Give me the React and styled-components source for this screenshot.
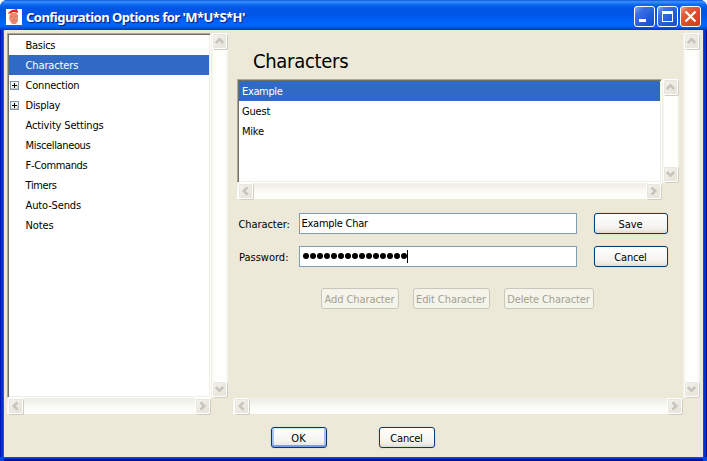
import React from 'react';
import styled, { createGlobalStyle, css } from 'styled-components';

const Global = createGlobalStyle`
  * { box-sizing: border-box; }
  body { margin: 0; background: #fff; }
`;

const Window = styled.div`
  width: 707px;
  height: 461px;
  display: flex;
  flex-direction: column;
  overflow: hidden;
  border-radius: 7px 7px 0 0;
  background: #0048e0;
  font: 11px/20px 'DejaVu Sans Condensed', 'DejaVu Sans', sans-serif;
  font-stretch: condensed;
  color: #000;
  white-space: nowrap;
`;

const TitleBar = styled.header`
  height: 30px;
  flex: none;
  display: flex;
  align-items: center;
  padding: 3px 6px 0 6px;
  background: linear-gradient(#0848c8 0, #2a84f8 1px, #3a90ff 2px, #1670f4 4px, #0660ea 6px, #0055e4 9px, #0056e8 15px, #0062fb 22px, #0066ff 25px, #005cf0 27px, #0044cc 29px, #0038b8 30px);
`;

const Title = styled.h1`
  flex: 1;
  margin: 0 0 0 4px;
  font: bold 13px/20px 'Noto Sans', 'DejaVu Sans Condensed', sans-serif;
  letter-spacing: ${p => p.$spacing}px;
  color: #fff;
  text-shadow: 1px 1px 1px #0a1883;
`;

const CaptionButtons = styled.div`
  display: flex;
  gap: 2px;
`;

const CaptionButton = styled.button`
  width: 21px;
  height: 21px;
  padding: 0;
  border: 1px solid #fff;
  border-radius: 3px;
  display: flex;
  background: ${p => p.$close
    ? 'linear-gradient(135deg, #f0a088 0, #e0603c 25%, #d84820 65%, #c84018 100%)'
    : 'linear-gradient(135deg, #86a8f4 0, #3c70e8 25%, #2458dc 65%, #1c4cc8 100%)'};
`;

const Client = styled.main`
  height: 427px;
  margin: 0 4px 4px;
  padding: 3px 3px 0;
  background: #ece9d8;
  box-shadow: -1px 0 #1058e8, -3px 0 #0030d8, -4px 0 #0018b0, 1px 0 #0848e0, 3px 0 #0030d0, 4px 0 #001090, 0 1px #0848e0, 0 2px #0038d8, 0 4px #001090;
`;

const Columns = styled.div`
  display: flex;
  height: 382px;
  gap: 5px;
`;

const ScrollFrame = styled.div`
  width: ${p => p.$w}px;
  height: ${p => p.$h}px;
  flex: none;
  display: grid;
  grid-template-columns: 1fr 17px;
  grid-template-rows: 1fr 17px;
`;

const Pane = styled.div`
  overflow: hidden;
  min-width: 0;
  min-height: 0;
  ${p => p.$sunken && css`
    background: #fff;
    border: 1px solid;
    border-color: #aca899 #fff #fff #aca899;
    box-shadow: inset 1px 1px #716f64, inset -1px -1px #f1efe2;
    padding: 1px;
  `}
`;

const Track = styled.div`
  display: flex;
  justify-content: space-between;
  flex-direction: ${p => (p.$vertical ? 'column' : 'row')};
  background: ${p => (p.$vertical
    ? 'linear-gradient(90deg, #f0efe8 0, #f0efe8 1px, #fefefa 2px, #fefefa 15px, #eeede5 17px)'
    : 'linear-gradient(#f5f4ec 0, #eeede5 1px, #f3f2ed 4px, #fcfcfa 10px, #fefefb 16px, #ece9d8 16px)')};
`;

const ArrowBox = styled.div`
  width: 17px;
  height: 17px;
  flex: none;
  display: flex;
  padding: 0 0 0 1px;
  svg {
    width: 15px;
    height: 16px;
    border: 1px solid #fff;
    border-radius: 2px;
    background: linear-gradient(135deg, #f3f2ed, #e5e4d8);
    box-shadow: 1px 1px #cfcdbf, inset 0 0 0 1px #e8e7df;
  }
`;

const Tree = styled.ul`
  margin: 0;
  padding: 0;
  list-style: none;
`;

const Row = styled.li`
  height: 20px;
  display: flex;
  align-items: center;
  padding-left: ${p => p.$indent}px;
  letter-spacing: ${p => p.$spacing || 0}px;
  ${p => p.$selected && css`
    background: #316ac5;
    color: #fff;
  `}
`;

const RowText = styled.span`
  height: 20px;
  line-height: 22px;
`;

const Expander = styled.span`
  width: 16px;
  height: 9px;
  display: flex;
  flex: none;
`;

const Heading = styled.h2`
  margin: 0;
  height: 46px;
  padding: 13px 0 0 20px;
  font: 20px/30px 'DejaVu Sans Condensed', 'DejaVu Sans', sans-serif;
  font-stretch: condensed;
  letter-spacing: ${p => p.$spacing}px;
`;

const PaneBody = styled.div`
  padding-left: 4px;
`;

const Field = styled.div`
  display: grid;
  grid-template-columns: 62px 295px 74px;
  height: 21px;
  margin-top: ${p => p.$top}px;
`;

const Label = styled.label`
  padding-left: ${p => p.$pad}px;
  line-height: 23px;
  letter-spacing: ${p => p.$spacing || 0}px;
`;

const Input = styled.div`
  width: 278px;
  height: 21px;
  display: flex;
  align-items: center;
  padding-left: ${p => p.$pad}px;
  border: 1px solid #7f9db9;
  background: #fff;
  letter-spacing: ${p => p.$spacing || 0}px;
`;

const Dots = styled.span`
  display: flex;
  gap: 1px;
  padding: 0 0 1px 1px;
`;

const Dot = styled.i`
  width: 6px;
  height: 6px;
  border-radius: 50%;
  background: #000;
`;

const Caret = styled.i`
  width: 1px;
  height: 13px;
  margin: 0 0 1px;
  background: #000;
`;

const Button = styled.button`
  width: ${p => p.$w}px;
  height: 21px;
  padding: 2px 0 0;
  border: 1px solid #003c74;
  border-radius: 3px;
  background: linear-gradient(#fff, #f4f3ee 70%, #ebe9e0 88%, #dcd8cc);
  box-shadow: 0 0 0 1px #e5e1d1;
  font: inherit;
  line-height: 17px;
  letter-spacing: ${p => p.$spacing || 0}px;
  text-align: center;
  text-indent: -1px;
  color: #000;
  ${p => p.$primary && css`
    box-shadow: inset 0 1px #cee7ff, inset 0 -2px #7b9de4, inset 2px 0 #a6c2f2, inset -2px 0 #a6c2f2, 0 0 0 1px #e5e1d1;
  `}
  &:disabled {
    border-color: #c9c7ba;
    background: #f5f4ea;
    color: #a1a192;
    box-shadow: none;
  }
`;

const Actions = styled.div`
  display: flex;
  gap: 14px;
  margin: 21px 0 0 84px;
`;

const Footer = styled.footer`
  display: flex;
  gap: 52px;
  padding: 12px 0 0 264px;
`;

const angles = { up: 0, right: 90, down: 180, left: 270 };

function Arrow({ dir }) {
  return (
    <ArrowBox>
      <svg viewBox="0 0 13 14">
        <path d="M2.800 9 6.500 5.300 10.200 9" fill="none" stroke="#c6c5bc" strokeWidth="2.600" transform={`rotate(${angles[dir]} 6.5 7)`} />
      </svg>
    </ArrowBox>
  );
}

function Scroller({ w, h, sunken, children }) {
  return (
    <ScrollFrame $w={w} $h={h}>
      <Pane $sunken={sunken}>{children}</Pane>
      <Track $vertical><Arrow dir="up" /><Arrow dir="down" /></Track>
      <Track><Arrow dir="left" /><Arrow dir="right" /></Track>
    </ScrollFrame>
  );
}

function Plus() {
  return (
    <svg width="9" height="9" shapeRendering="crispEdges">
      <rect width="9" height="9" fill="#7898b5" />
      <rect x="1" y="1" width="7" height="7" fill="#f6f4ee" />
      <path d="M1 7h7v1h-7zM7 4h1v4h-1z" fill="#d0c8b8" />
      <path d="M2 4h5v1h-5zM4 2h1v5h-1z" fill="#000" />
    </svg>
  );
}

function AppIcon() {
  return (
    <svg width="16" height="16" viewBox="0 0 16 16">
      <rect width="16" height="16" fill="#fff" />
      <path d="M4 5 5 4h5l2 2v6l-2 3H6l-2-3-1-3z" fill="#ef8872" />
      <path d="M3 3 6 1l5-1 1 3-1 1-3-1-3 1-3 1z" fill="#dc2a20" />
      <path d="M5 7.500h2M9 7.500h2M6 11.500h4M8 9.500h1" stroke="#d07868" strokeWidth="1" />
    </svg>
  );
}

const topics = [
  { name: 'Basics', spacing: -0.3 },
  { name: 'Characters', spacing: -0.14, selected: true },
  { name: 'Connection', spacing: -0.23, expandable: true },
  { name: 'Display', spacing: -0.3, expandable: true },
  { name: 'Activity Settings', spacing: -0.16 },
  { name: 'Miscellaneous', spacing: -0.36 },
  { name: 'F-Commands', spacing: -0.36 },
  { name: 'Timers', spacing: -0.4 },
  { name: 'Auto-Sends', spacing: -0.15 },
  { name: 'Notes', spacing: -0.15 },
];

export default function App() {
  return (
    <>
      <Global />
      <Window>
        <TitleBar>
          <AppIcon />
          <Title $spacing={-0.53}>Configuration Options for 'M*U*S*H'</Title>
          <CaptionButtons>
            <CaptionButton>
              <svg width="19" height="19"><path d="M4 12h7v3H4z" fill="#fff" /></svg>
            </CaptionButton>
            <CaptionButton>
              <svg width="19" height="19"><path fillRule="evenodd" d="M4 4h11v11H4zM5 7v7h9V7z" fill="#fff" /></svg>
            </CaptionButton>
            <CaptionButton $close>
              <svg width="19" height="19"><path d="M4.500 4.500l10 10M14.500 4.500l-10 10" stroke="#fff" strokeWidth="2.300" /></svg>
            </CaptionButton>
          </CaptionButtons>
        </TitleBar>
        <Client>
          <Columns>
            <Scroller w={221} h={382} sunken>
              <Tree>
                {topics.map(t => (
                  <Row key={t.name} $indent={t.expandable ? 0.6 : 16.6} $selected={t.selected} $spacing={t.spacing}>
                    {t.expandable && <Expander><Plus /></Expander>}
                    <RowText>{t.name}</RowText>
                  </Row>
                ))}
              </Tree>
            </Scroller>
            <Scroller w={467} h={382}>
              <Heading $spacing={-0.3}>Characters</Heading>
              <PaneBody>
                <Scroller w={442} h={121} sunken>
                  <Tree>
                    <Row $indent={3} $spacing={-0.35} $selected><RowText>Example</RowText></Row>
                    <Row $indent={3} $spacing={-0.2}><RowText>Guest</RowText></Row>
                    <Row $indent={3} $spacing={-0.25}><RowText>Mike</RowText></Row>
                  </Tree>
                </Scroller>
                <Field $top={13}>
                  <Label $pad={1.5} $spacing={-0.08}>Character:</Label>
                  <Input $pad={1.5} $spacing={-0.26}>Example Char</Input>
                  <Button $w={74} $spacing={-0.1}>Save</Button>
                </Field>
                <Field $top={12}>
                  <Label $pad={2}>Password:</Label>
                  <Input $pad={2}>
                    <Dots>{Array.from({ length: 15 }, (_, i) => <Dot key={i} />)}</Dots>
                    <Caret />
                  </Input>
                  <Button $w={74} $spacing={-0.2}>Cancel</Button>
                </Field>
                <Actions>
                  <Button $w={78} $spacing={-0.08} disabled>Add Character</Button>
                  <Button $w={77} $spacing={-0.08} disabled>Edit Character</Button>
                  <Button $w={90} $spacing={-0.12} disabled>Delete Character</Button>
                </Actions>
              </PaneBody>
            </Scroller>
          </Columns>
          <Footer>
            <Button $w={56} $primary>OK</Button>
            <Button $w={56} $spacing={-0.2}>Cancel</Button>
          </Footer>
        </Client>
      </Window>
    </>
  );
}
